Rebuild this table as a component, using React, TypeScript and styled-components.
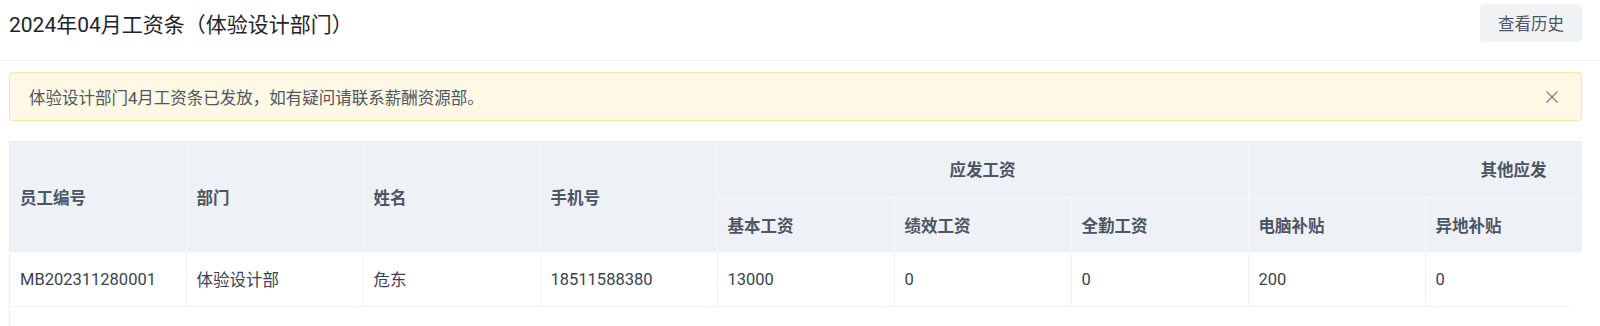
import styled, { createGlobalStyle } from "styled-components";

const GlobalStyle = createGlobalStyle`
  body {
    margin: 0;
    background: #ffffff;
    font-family: Roboto, "Noto Sans CJK SC", sans-serif;
  }
`;

const columns = [
    { key: "no", title: "员工编号" },
    { key: "dept", title: "部门" },
    { key: "name", title: "姓名" },
    { key: "phone", title: "手机号" },
];

// the last column of "其他应发" sits outside the visible area
const groups = [
    { title: "应发工资", children: ["基本工资", "绩效工资", "全勤工资"] },
    { title: "其他应发", children: ["电脑补贴", "异地补贴", ""] },
];

const rows = [
    {
        id: 1,
        cells: ["MB202311280001", "体验设计部", "危东", "18511588380", "13000", "0", "0", "200", "0", ""],
    },
];

const COL_WIDTH = 177;
const colCount = columns.length + groups.reduce((n, g) => n + g.children.length, 0);

const Page = styled.div`
  width: 1600px;
  height: 326px;
  overflow: hidden;
`;

const Header = styled.header`
  height: 60px;
  display: flex;
  align-items: center;
  justify-content: space-between;
  padding: 0 18px 0 9px;
  border-bottom: 1px solid #eef0f3;
`;

const Title = styled.h1`
  margin: -14px 0 0;
  font-size: 21px;
  font-weight: 400;
  color: #1f2329;
`;

const HistoryButton = styled.button`
  width: 102px;
  height: 38px;
  margin-top: -14px;
  border: none;
  border-radius: 4px;
  background: #f0f3f6;
  color: #4b5563;
  font-family: inherit;
  font-size: 16.5px;
  cursor: pointer;
`;

const Content = styled.main`
  padding: 11px 18px 0 9px;
`;

const Alert = styled.div`
  height: 47px;
  display: flex;
  align-items: center;
  justify-content: space-between;
  padding: 0 22px 0 19px;
  background: #fef8e4;
  border: 1px solid #fde6a3;
  border-radius: 3px;
  color: #50565f;
  font-size: 16.5px;
`;

const CloseButton = styled.span`
  display: flex;
  color: #7b8390;
  cursor: pointer;
`;

const TableFrame = styled.div`
  margin-top: 20px;
  border-top: 1px solid #e9edf2;
  border-left: 1px solid #e9edf2;
  height: 200px;
`;

const Clip = styled.div<{ gutter: number }>`
  overflow: hidden;
  margin-right: ${(props) => props.gutter}px;
`;

const Table = styled.table`
  table-layout: fixed;
  border-collapse: collapse;
  width: ${COL_WIDTH * colCount - 1}px;
`;

const Th = styled.th<{ align?: string }>`
  height: 55px;
  padding: 0 10px;
  background: #eef2f7;
  border-right: 1px solid #f5f7fa;
  border-bottom: 1px solid #f5f7fa;
  color: #4b5563;
  font-size: 16.5px;
  font-weight: 600;
  text-align: ${(props) => props.align || "left"};
  box-sizing: border-box;
`;

const Td = styled.td`
  height: 54px;
  padding: 0 10px;
  border-right: 1px solid #eef1f5;
  border-bottom: 1px solid #eef1f5;
  color: #3b4250;
  font-size: 16.5px;
  box-sizing: border-box;
`;

const ColGroup = () => (
    <colgroup>
        {Array.from({ length: colCount }).map((_, i) => (
            <col key={i} style={{ width: i === 0 ? COL_WIDTH - 1 : COL_WIDTH }} />
        ))}
    </colgroup>
);

const Salary = () => {
    return (
        <Page>
            <GlobalStyle />
            <Header>
                <Title>2024年04月工资条（体验设计部门）</Title>
                <HistoryButton>查看历史</HistoryButton>
            </Header>
            <Content>
                <Alert>
                    <span>体验设计部门4月工资条已发放，如有疑问请联系薪酬资源部。</span>
                    <CloseButton>
                        <svg width="14" height="14" viewBox="0 0 14 14" fill="none">
                            <path d="M1.5 1.5l11 11M12.5 1.5l-11 11" stroke="currentColor" strokeWidth="1.3" />
                        </svg>
                    </CloseButton>
                </Alert>
                <TableFrame>
                    <Clip gutter={0}>
                        <Table>
                            <ColGroup />
                            <thead>
                                <tr>
                                    {columns.map((c) => (
                                        <Th key={c.key} rowSpan={2}>
                                            {c.title}
                                        </Th>
                                    ))}
                                    {groups.map((g) => (
                                        <Th key={g.title} colSpan={g.children.length} align="center">
                                            {g.title}
                                        </Th>
                                    ))}
                                </tr>
                                <tr>
                                    {groups.map((g) =>
                                        g.children.map((c, i) => <Th key={g.title + i}>{c}</Th>)
                                    )}
                                </tr>
                            </thead>
                        </Table>
                    </Clip>
                    <Clip gutter={10}>
                        <Table>
                            <ColGroup />
                            <tbody>
                                {rows.map((r) => (
                                    <tr key={r.id}>
                                        {r.cells.map((v, i) => (
                                            <Td key={i}>{v}</Td>
                                        ))}
                                    </tr>
                                ))}
                            </tbody>
                        </Table>
                    </Clip>
                </TableFrame>
            </Content>
        </Page>
    );
};

export default Salary;
